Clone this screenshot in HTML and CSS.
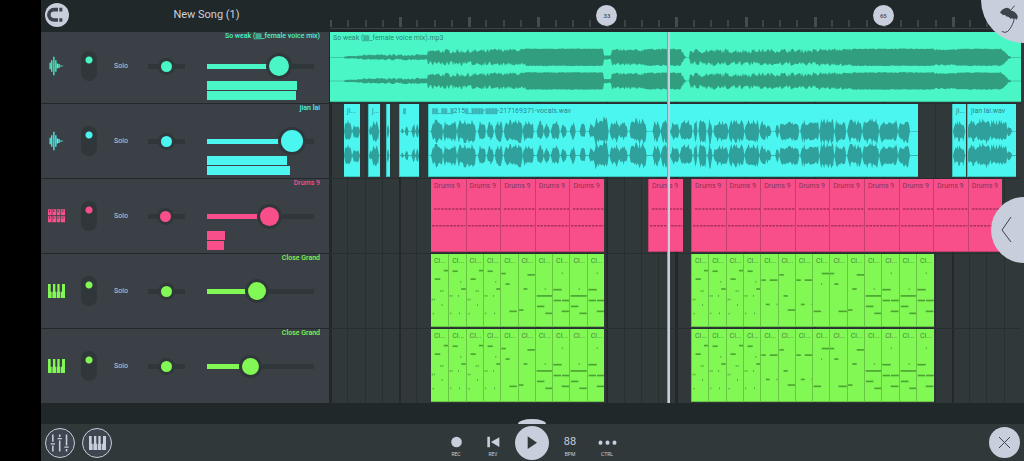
FILE: index.html
```html
<!DOCTYPE html>
<html lang="en">
<head>
<meta charset="utf-8">
<title>New Song (1)</title>
<link rel="stylesheet" href="styles.css">
</head>
<body>
<svg class="defs" aria-hidden="true">
  <symbol id="i-wave" viewBox="145 169 46 60"><path stroke="currentColor" stroke-width="4" d="M148.500 189v20M153.500 181v36M160 171v56M166 181v36M171 191v16M176 193v12M182 196.500v5M187 198v2"/></symbol>
  <symbol id="i-piano" viewBox="0 0 51 42"><path fill="currentColor" d="M0 0h8v23h3v19H0zM13 42V23h2V0h7v23h2v19zM26 42V23h2V0h7v23h2v19zM39 42V23h3V0h9v42z"/></symbol>
  <symbol id="i-pads" viewBox="0 0 51 42"><path fill="currentColor" fill-rule="evenodd" d="M0 1h11v18H0zM13 1h11v18H13zM26 1h11v18H26zM39 1h12v18H39zM0 22h11v18H0zM13 22h11v18H13zM26 22h11v18H26zM39 22h12v18H39zM3 4v5h3V4zM16 4v5h3V4zM29 4v5h3V4zM43 4v5h3V4zM3 25v4h3v-4zM16 25v4h3v-4zM29 25v4h3v-4zM43 25v4h3v-4z"/></symbol>
</svg>
<div class="app">
  <header class="top">
    <div class="song">
      <button class="round magnet" aria-label="Snap"><svg viewBox="135 11 72 72"><path d="M174 31h-12a15.500 15.500 0 0 0 0 31h12" fill="none" stroke="#3d444b" stroke-width="11"/><path fill="#3d444b" d="M178 25.500h9v11h-9zM178 56.500h9v11h-9z"/></svg></button>
      <h1>New Song (1)</h1>
    </div>
    <div class="ruler" id="ruler"></div>
  </header>

  <main class="tracks">
    <section class="track mint">
      <div class="panel">
        <h2>So weak (<i>▒▒</i>_female voice mix)</h2>
        <svg class="kind wave"><use href="#i-wave"/></svg>
        <input type="checkbox" class="mute" checked aria-label="Track on">
        <button class="solo">Solo</button>
        <input type="range" class="pan" value="50" aria-label="Pan">
        <input type="range" class="vol" value="71" style="--level:71%;--size:20px" aria-label="Volume">
        <div class="meter"><b style="width:90px"></b><b style="width:89px"></b></div>
      </div>
      <div class="lane" id="lane-1"></div>
    </section>
    <section class="track cyan">
      <div class="panel">
        <h2>jian lai</h2>
        <svg class="kind wave"><use href="#i-wave"/></svg>
        <input type="checkbox" class="mute" checked aria-label="Track on">
        <button class="solo">Solo</button>
        <input type="range" class="pan" value="50" aria-label="Pan">
        <input type="range" class="vol" value="87" style="--level:87%;--size:22px" aria-label="Volume">
        <div class="meter"><b style="width:80px"></b><b style="width:83px"></b></div>
      </div>
      <div class="lane" id="lane-2"></div>
    </section>
    <section class="track pink">
      <div class="panel">
        <h2>Drums 9</h2>
        <svg class="kind"><use href="#i-pads"/></svg>
        <input type="checkbox" class="mute" checked aria-label="Track on">
        <button class="solo">Solo</button>
        <input type="range" class="pan" value="47" aria-label="Pan">
        <input type="range" class="vol" value="60" style="--level:60%;--size:19px" aria-label="Volume">
        <div class="meter"><b style="width:18px"></b><b style="width:17px"></b></div>
      </div>
      <div class="lane" id="lane-3"></div>
    </section>
    <section class="track lime">
      <div class="panel">
        <h2>Close Grand</h2>
        <svg class="kind"><use href="#i-piano"/></svg>
        <input type="checkbox" class="mute" checked aria-label="Track on">
        <button class="solo">Solo</button>
        <input type="range" class="pan" value="50" aria-label="Pan">
        <input type="range" class="vol" value="46" style="--level:46%;--size:18px" aria-label="Volume">
      </div>
      <div class="lane" id="lane-4"></div>
    </section>
    <section class="track lime">
      <div class="panel">
        <h2>Close Grand</h2>
        <svg class="kind"><use href="#i-piano"/></svg>
        <input type="checkbox" class="mute" checked aria-label="Track on">
        <button class="solo">Solo</button>
        <input type="range" class="pan" value="50" aria-label="Pan">
        <input type="range" class="vol" value="39" style="--level:39%;--size:17px" aria-label="Volume">
      </div>
      <div class="lane" id="lane-5"></div>
    </section>
    <div class="cursor-layer"><div class="cursor" id="cursor"></div></div>
  </main>

  <div class="strip"><div class="grip"></div></div>

  <footer class="bottom">
    <nav class="views">
      <button class="round outline" aria-label="Mixer"><svg viewBox="0 0 90 90"><path stroke="#c8cedb" stroke-width="5" d="M22 18v23M22 53v19M44 18v8M44 37v35M66 18v35M66 64v8"/><path stroke="#c8cedb" stroke-width="4" d="M15 47.500h14M37 31h14M59 58h14"/></svg></button>
      <button class="round outline keys" aria-label="Keyboard"><svg><use href="#i-piano"/></svg></button>
    </nav>
    <div class="transport">
      <button class="tool"><svg viewBox="0 0 36 36"><circle cx="18" cy="18" r="16" fill="#c8cedb"/></svg>REC</button>
      <button class="tool"><svg viewBox="0 0 40 36"><path fill="#c8cedb" d="M1 2h8v32H1zM38 3v30L12 18z"/></svg>REV</button>
      <button class="round play" aria-label="Play"><svg viewBox="0 0 102 102"><path fill="#31383a" d="M38 31v38l28-19z"/></svg></button>
      <button class="tool"><strong>88</strong>BPM</button>
      <button class="tool"><svg class="dots" viewBox="0 0 56 36"><path fill="#c8cedb" d="M1 20a6 6.500 0 1 0 12 0a6 6.500 0 1 0-12 0M22 20a6 6.500 0 1 0 12 0a6 6.500 0 1 0-12 0M43 20a6 6.500 0 1 0 12 0a6 6.500 0 1 0-12 0"/></svg>CTRL</button>
    </div>
    <button class="round close" aria-label="Close"><svg viewBox="0 0 31 31"><path fill="none" stroke="#3d444b" d="M10 10l11 11M21 10L10 21"/></svg></button>
  </footer>

  <button class="corner" aria-label="Help"><svg viewBox="920 0 132 129"><path fill="#3d444b" d="M978 38q7-15 23-16q8 1 11 9q17 4 21 19l-3 9q-6-5-11-3q-6-3-9 0q-4-8-12-7q-5-7-11-4q-2-5-9-7z"/><path fill="none" stroke="#3d444b" stroke-width="3" d="M1010 31l13-15M1021 53c3 8-8 31-19 42q-8 6-18 0"/></svg></button>
  <button class="drawer" aria-label="Open panel"><svg viewBox="0 0 33 66"><path fill="none" stroke="#3d444b" d="M20 20l-9 13l9 12"/></svg></button>
</div>
<script src="app.js"></script>
</body>
</html>
```

FILE: styles.css
```css
* { box-sizing: border-box; }
:root { --light: #c8cedb; --dark: #21282a; --well: #30373a; --side: 289px; }
body { margin: 0; background: #000; font-family: Roboto, "Noto Sans", sans-serif; }
button { margin: 0; padding: 0; border: 0; background: none; font: inherit; color: inherit; }
input { margin: 0; }
svg { display: block; }
.defs { position: absolute; width: 0; height: 0; }

.app { position: relative; display: flex; flex-direction: column; min-height: 100vh; margin-left: 41px; overflow: hidden; background: var(--dark); }

.top { display: grid; grid-template-columns: var(--side) 1fr; height: 32px; }
.song { display: grid; grid-template-columns: 24px 1fr 24px; align-items: center; padding: 0 4px 2px; }
.song h1 { margin: 0; padding-left: 42px; font-size: 11px; font-weight: 400; line-height: 14px; text-align: center; color: #ccd1dc; }
.round { display: block; border-radius: 50%; background: var(--light); }
.round svg { width: 100%; height: 100%; }
.magnet { width: 24px; height: 24px; }

.ruler { position: relative; display: grid; grid-template-columns: repeat(40, 1fr); align-items: end; margin: 0 3px 3px 0; border-bottom: 1px solid #3c4345; padding-bottom: 1px; }
.ruler span { width: 2px; height: 7px; background: #3d4447; }
.ruler span:nth-child(4n+1) { width: 3px; height: 10px; background: #454c50; }
.ruler span:first-child { width: 2px; height: 7px; }
.flag { position: absolute; top: 5px; width: 21px; height: 21px; margin-left: -10px; border-radius: 50%; background: var(--light); color: #444b55; font-size: 6px; font-weight: 500; line-height: 21px; text-align: center; }

.tracks { position: relative; overflow: hidden; }
.track { display: grid; grid-template-columns: var(--side) 1fr; height: 75px; background: #31383a; }
.track:first-child { margin-top: -4px; }
.track:first-child h2 { padding-top: 3px; }
.track:first-child .clip span { top: 5px; }
.mint { --tone: #4af6c6; --ink: #319e80; }
.cyan { --tone: #4cf6f0; --ink: #2fa09b; }
.pink { --tone: #f84e8a; --ink: #a93160; }
.lime { --tone: #82f855; --ink: #4ba432; }

.panel { display: grid; grid-template-columns: 17px 16px 16px 43px 113px; grid-template-rows: 22px 30px 22px; column-gap: 16px; align-items: center; justify-items: center; padding-left: 7px; border-top: 1px solid #23292b; border-right: 1px solid #23292b; background: #3a4046; color: var(--tone); }
.panel h2 { grid-column: 1 / -1; align-self: start; justify-self: end; margin: 0 -3px 0 0; font-size: 7px; font-weight: 500; line-height: 9px; color: var(--tone); }
i { font: 5px "DejaVu Sans Mono", monospace; line-height: 1; }
.kind { width: 17px; height: 14px; }
.kind.wave { width: 15px; height: 20px; }
.mute { appearance: none; width: 16px; height: 30px; border-radius: 8px; background: radial-gradient(circle at 8px 9px, var(--tone) 3px, transparent 4px) var(--well); }
.solo { font-size: 7px; line-height: 10px; color: #c8ccd3; }

.pan, .vol { appearance: none; height: 5px; background: var(--well); }
.pan { width: 37px; --size: 11px; }
.vol { width: 107px; background: linear-gradient(90deg, var(--tone) var(--level), var(--well) var(--level)); }
input::-webkit-slider-thumb { appearance: none; width: var(--size); height: var(--size); border-radius: 50%; background: var(--tone); box-shadow: 0 0 0 3px var(--well); }
.meter { grid-column: 5; justify-self: start; align-self: start; display: grid; gap: 1px; padding-left: 3px; }
.meter b { height: 9px; background: var(--tone); }

.lane { position: relative; margin: 0 3px 0 0; border-top: 1px solid #272e30; background:
  repeating-linear-gradient(90deg, #23292b 0 2px, transparent 2px 10%),
  repeating-linear-gradient(90deg, #282f31 0 1px, transparent 1px 2.5%); }
.clip { position: absolute; top: 0; height: 73px; overflow: hidden; border-bottom: 1px solid #0003; background: var(--tone); }
.clip + .clip { border-left: 1px solid #0003; }
.clip span { position: absolute; top: 3px; left: 3px; font-size: 7px; line-height: 9px; white-space: nowrap; color: #123c; opacity: 0.7; }
.clip svg { width: 100%; height: 100%; fill: var(--ink); }
.drums { stroke: var(--ink); }
.cursor-layer { position: absolute; top: 0; bottom: 0; left: var(--side); right: 3px; pointer-events: none; }
.cursor { position: absolute; top: 0; bottom: 0; width: 3px; margin-left: -1px; background: #c8cedb; border-left: 1px solid #8c9aa3; }

.strip { display: flex; flex: 1 0 21px; align-items: flex-end; justify-content: center; padding-right: 2px; }
.grip { width: 28px; height: 5px; border-radius: 50% 50% 0 0 / 100% 100% 0 0; background: var(--light); }

.bottom { display: grid; grid-template-columns: 1fr auto 1fr; align-items: center; height: 37px; padding: 0 4px; background: #31383a; color: var(--light); }
.views { display: flex; gap: 7px; }
.outline { width: 30px; height: 30px; border: 1px solid var(--light); background: #3f464f; color: var(--light); }
.keys svg { width: 17px; height: 14px; margin: 0 auto; }
.transport { display: flex; align-items: center; gap: 6px; margin-right: 2px; }
.tool { display: flex; flex-direction: column; align-items: center; justify-content: end; width: 31px; height: 30px; font-size: 5px; line-height: 8px; }
.tool svg { width: 13px; height: 12px; margin-bottom: 2px; }
.tool .dots { width: 19px; }
.tool strong { font-size: 11px; font-weight: 400; line-height: 12px; margin-bottom: 2px; }
.play { width: 34px; height: 34px; }
.close { justify-self: end; width: 31px; height: 31px; }

.corner { position: absolute; top: 0; right: 0; width: 43px; height: 43px; border-radius: 0 0 0 100%; background: var(--light); }
.corner svg { width: 43px; height: 43px; }
.drawer { position: absolute; top: 197px; right: 0; width: 33px; height: 66px; border-radius: 33px 0 0 33px; background: var(--light); }
.drawer svg { width: 33px; height: 66px; }
```

FILE: app.js
```js
// Timeline positions run from 0 to SPAN units, which is 80 bars.
const SPAN = 691;
const pct = v => (v / SPAN * 100) + '%';

let seed = 7;
const rnd = () => (seed = (seed * 16807) % 2147483647) / 2147483647;

function addClip(lane, start, width, label, box, body, cls) {
  const el = document.createElement('div');
  el.className = 'clip';
  el.style.left = pct(start);
  el.style.width = pct(width);
  el.innerHTML = `<svg class="${cls || ''}" viewBox="${box}" preserveAspectRatio="none">${body}</svg><span>${label}</span>`;
  document.getElementById(lane).append(el);
}

// One filled shape per channel: upper edge left to right, lower edge back.
function channels(start, width, centres, level) {
  const n = Math.round(width);
  const amps = Array.from({ length: n + 1 }, (_, k) => {
    const x = k * width / n;
    return [x, level(start + x), level(start + x)];
  });
  return centres.map(c => {
    const up = amps.map(a => `${a[0].toFixed(1)} ${(c - a[1]).toFixed(1)}`);
    const down = amps.map(a => `${a[0].toFixed(1)} ${(c + a[2]).toFixed(1)}`).reverse();
    return `<path d="M${up.join('L')}L${down.join('L')}z"/>`;
  }).join('');
}

// [from, to, quietest, loudest]
const song = [[15, 28, .7, 1.5], [28, 32, 1, 2], [32, 50, 1.5, 3], [50, 98, 1.4, 3.2], [98, 101, 3, 7],
  [101, 162, 3.8, 8.6], [162, 196, 5.5, 9], [196, 274, 8.3, 9], [274, 282, 1.6, 2.6], [282, 314, 5.5, 8.5],
  [314, 352, 7.5, 9], [352, 354, 4, 6], [354, 356, 1, 2], [360, 425, 3.8, 8.8], [425, 490, 4.5, 8.8],
  [490, 522, 6, 9], [522, 605, 8.2, 9], [605, 627, 6.8, 8.3], [627, 672, 8, 9], [672, 674, 7, 8],
  [674, 676, 5.5, 6], [676, 678, 3.5, 4], [678, 681, 1, 2]];
const songLevel = x => {
  const s = song.find(p => x >= p[0] && x < p[1]);
  return s ? s[2] + rnd() * (s[3] - s[2]) : .3;
};
addClip('lane-1', 0, SPAN, 'So weak (<i>▒▒</i>_female voice mix).mp3', '0 0 691 73', channels(0, SPAN, [28.7, 52.7], songLevel));

// Sung phrases: [from, to, loudness]
const phrases = [[15, 22, 10], [23, 30, 6], [39, 42, 5], [42, 49, 9], [56, 59, 8], [71, 73, 4], [75, 78, 7], [82, 85, 8], [86, 89, 8],
  [101, 112, 10], [113, 126, 9], [127, 145, 10], [148, 155, 9], [157, 163, 8], [165, 172, 9], [174, 192, 10], [193, 203, 9],
  [207, 213, 9], [214, 219, 7], [221, 229, 9], [231, 236, 6], [240, 245, 8], [250, 255, 8], [259, 264, 7], [264, 278, 12],
  [280, 289, 10], [289, 297, 8], [300, 316, 11], [323, 330, 9], [331, 340, 10], [341, 349, 8], [350, 362, 10], [364, 367, 12],
  [369, 376, 13], [378, 382, 11], [384, 398, 9], [399, 414, 10], [415, 429, 10], [430, 436, 9], [436, 441, 7], [446, 449, 8],
  [450, 469, 10], [471, 489, 10], [490, 504, 11], [505, 516, 10], [518, 532, 10], [533, 549, 11], [550, 568, 10], [569, 580, 10],
  [623, 635, 9], [637, 646, 9], [646, 660, 11], [660, 677, 10], [677, 682, 4]];
const voiceLevel = x => {
  const p = phrases.find(q => x >= q[0] && x < q[1]);
  if (!p) return .3;
  const edge = Math.min(1, .6 + Math.min((x - p[0]) * 2, p[1] - x) / 5);
  const peak = rnd() > .8 ? 1.18 : .62 + rnd() * .36;
  return p[2] * edge * peak;
};
[[14, 16, 'ji...'], [38, 12, 'j...'], [56, 4, ''], [69, 20, '<i>▒</i>'],
 [98, 490, '<i>▒▒</i>_<i>▒▒</i>_<i>▒</i>215<i>▒</i>_<i>▒▒▒▒</i>-<i>▒▒▒▒</i>-217169371-vocals.wav'],
 [622, 14, 'ji...'], [637, 49, 'jian lai.wav']].forEach(([s, w, label]) =>
  addClip('lane-2', s, w, label, `${s} 0 ${w} 73`, `<g transform="translate(${s})">${channels(s, w, [27.7, 52.3], voiceLevel)}</g>`));

// Drum pattern: two rows of repeated hits.
const hits = '<path fill="none" stroke-width="1.5" stroke-dasharray="2.6 1" d="M3 30.500H34.500M1 47.500H34.500"/>';
const bar = 34.6;
const drums = (s, n) => { for (let i = 0; i < n; i++) addClip('lane-3', s + i * bar, bar, 'Drums 9', '0 0 34.6 73', hits, 'drums'); };
drums(101, 5); drums(318, 1); drums(361, 9);

// Piano patterns: [x, y, length] on a 52 by 219 grid.
const notes = {
  A: [[37, 51, 15], [11, 77, 16], [27, 113, 3], [33, 113, 3], [2, 139, 3], [8, 139, 3], [31, 156, 3], [5, 182, 3]],
  B: [[11, 53, 16], [35, 85, 3], [38, 107, 14], [2, 128, 3], [8, 128, 3], [28, 128, 3], [4, 181, 3], [31, 181, 3]],
  C: [[1, 60, 14], [14, 92, 13], [26, 175, 23]],
  D: [[0, 171, 14], [26, 64, 23], [14, 107, 12]],
  E: [[2, 128, 50], [27, 107, 3], [3, 160, 23], [29, 181, 23]],
  F: [[1, 109, 26], [27, 59, 3], [2, 142, 23], [28, 142, 24], [27, 175, 24]],
  G: [[1, 80, 14], [27, 80, 24], [15, 154, 12], [48, 154, 3]],
  H: [[1, 64, 14], [14, 128, 13], [27, 171, 25]],
  I: [[25, 92, 3], [27, 60, 25], [2, 175, 23]],
  J: [[0, 60, 13], [13, 92, 13], [26, 175, 26]],
  K: [[0, 171, 14], [13, 107, 14], [27, 64, 25]]
};
const piano = (lane, s, seq) => [...seq].forEach((k, i) =>
  addClip(lane, s + i * bar / 2, bar / 2 + 0.5, 'Cl...', '0 0 52 219',
    notes[k].map(([x, y, w]) => `<rect x="${x}" y="${y - 3}" width="${w}" height="5"/>`).join('')));
['lane-4', 'lane-5'].forEach(lane => { piano(lane, 101, 'ABABCDEFEF'); piano(lane, 361, 'ABABGHGIJKEFEF'); });

const ruler = document.getElementById('ruler');
ruler.innerHTML = '<span></span>'.repeat(40);
[[33, 32], [65, 64]].forEach(([name, at]) => {
  ruler.insertAdjacentHTML('beforeend', `<b class="flag" style="left:${at / 80 * 100}%">${name}</b>`);
});
document.getElementById('cursor').style.left = pct(338);
```
